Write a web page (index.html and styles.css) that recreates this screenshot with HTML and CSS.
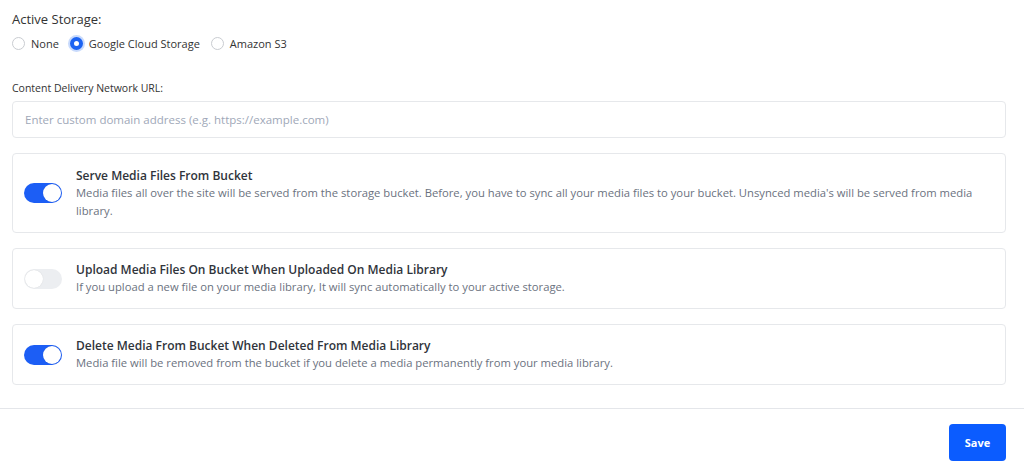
FILE: index.html
```html
<!DOCTYPE html>
<html lang="en">

<head>
    <meta charset="UTF-8" />
    <meta name="viewport" content="width=device-width, initial-scale=1.0" />
    <title>Storage Settings</title>
    <link rel="stylesheet" href="styles.css">
</head>

<body>
    <div class="settings">
        <div class="field">
            <div class="fieldLabel">Active Storage:</div>
            <div class="radios">
                <label class="radio"><span class="dot"></span>None</label>
                <label class="radio checked"><span class="dot"></span>Google Cloud Storage</label>
                <label class="radio"><span class="dot"></span>Amazon S3</label>
            </div>
        </div>

        <div class="field cdn">
            <label class="smallLabel" for="cdnUrl">Content Delivery Network URL:</label>
            <input type="text" id="cdnUrl" placeholder="Enter custom domain address (e.g. https://example.com)" />
        </div>

        <div class="option tall">
            <span class="toggle on"></span>
            <div class="optionText">
                <div class="optionTitle">Serve Media Files From Bucket</div>
                <div class="optionDesc">Media files all over the site will be served from the storage bucket. Before, you have to sync all your media files to your bucket. Unsynced media's will be served from media library.</div>
            </div>
        </div>

        <div class="option">
            <span class="toggle"></span>
            <div class="optionText">
                <div class="optionTitle">Upload Media Files On Bucket When Uploaded On Media Library</div>
                <div class="optionDesc">If you upload a new file on your media library, It will sync automatically to your active storage.</div>
            </div>
        </div>

        <div class="option">
            <span class="toggle on"></span>
            <div class="optionText">
                <div class="optionTitle">Delete Media From Bucket When Deleted From Media Library</div>
                <div class="optionDesc">Media file will be removed from the bucket if you delete a media permanently from your media library.</div>
            </div>
        </div>
    </div>

    <div class="footer">
        <button type="button">Save</button>
    </div>
</body>

</html>
```

FILE: styles.css
```css
body {
    margin: 0;
    font-family: "Open Sans", "DejaVu Sans", sans-serif;
    background-color: white;
    color: #2b2f36;
}

.settings {
    padding: 10px 18px 0 12px;
}

.fieldLabel {
    font-size: 13px;
    color: #333;
    height: 17px;
}

.radios {
    display: flex;
    gap: 11px;
    margin-top: 9px;
}

.radio {
    display: flex;
    align-items: center;
    gap: 6px;
    font-size: 11px;
    color: #333;
}

.dot {
    width: 11px;
    height: 11px;
    border: 1px solid #c9ccd1;
    border-radius: 50%;
    box-sizing: content-box;
}

.radio.checked .dot {
    width: 5px;
    height: 5px;
    border: 4px solid #1c63f2;
    background-color: white;
    box-shadow: 0 0 0 2px #c8dafc;
}

.cdn {
    margin-top: 30px;
}

.smallLabel {
    display: block;
    font-size: 10.5px;
    color: #333;
    margin-bottom: 6px;
}

input {
    display: block;
    width: 100%;
    height: 37px;
    box-sizing: border-box;
    border: 1px solid #e6e8eb;
    border-radius: 4px;
    padding: 0 12px;
    font-family: inherit;
    font-size: 11.5px;
    outline: none;
}

input::placeholder {
    color: #a0a8b8;
}

.option {
    display: flex;
    align-items: center;
    gap: 14px;
    border: 1px solid #e6e8eb;
    border-radius: 4px;
    padding: 0 11px;
    height: 61px;
    box-sizing: border-box;
    margin-top: 15px;
}

.option.tall {
    height: 80px;
}

.toggle {
    flex: none;
    width: 38px;
    height: 20px;
    border-radius: 10px;
    background-color: #eceef1;
    position: relative;
}

.toggle::after {
    content: "";
    position: absolute;
    top: 1px;
    left: 1px;
    width: 18px;
    height: 18px;
    border-radius: 50%;
    background-color: white;
    box-shadow: 0 0 1px rgba(0, 0, 0, 0.15);
}

.toggle.on {
    background-color: #1c5ef5;
}

.toggle.on::after {
    left: 19px;
}

.optionTitle {
    font-size: 12px;
    font-weight: 600;
    color: #30343b;
    line-height: 17px;
}

.optionDesc {
    font-size: 11.25px;
    color: #6b7280;
    line-height: 18px;
}

.footer {
    margin-top: 23px;
    border-top: 1px solid #e4e6ea;
    padding: 15px 18px 0 12px;
    display: flex;
    justify-content: flex-end;
}

button {
    background-color: #0b5cff;
    color: white;
    font-family: inherit;
    font-weight: bold;
    font-size: 11px;
    width: 57px;
    height: 37px;
    border: none;
    border-radius: 4px;
    cursor: pointer;
}
```
